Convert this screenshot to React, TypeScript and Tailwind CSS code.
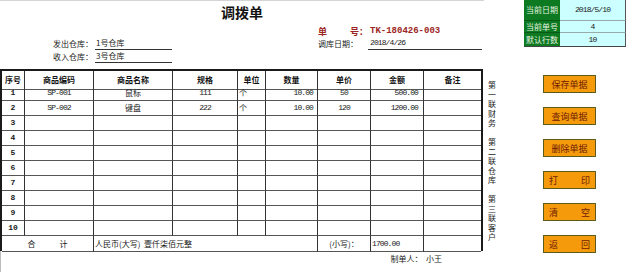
import React from "react";

const CJK = "font-['Noto_Sans_CJK_SC',sans-serif]";
const MONO = "font-['Liberation_Mono','Noto_Sans_CJK_SC',monospace]";

type Row = {
  n: number;
  code?: string;
  name?: string;
  spec?: string;
  unit?: string;
  qty?: string;
  price?: string;
  amt?: string;
};

const rows: Row[] = [
  { n: 1, code: "SP-001", name: "鼠标", spec: "111", unit: "个", qty: "10.00", price: "50", amt: "500.00" },
  { n: 2, code: "SP-002", name: "键盘", spec: "222", unit: "个", qty: "10.00", price: "120", amt: "1200.00" },
  { n: 3 },
  { n: 4 },
  { n: 5 },
  { n: 6 },
  { n: 7 },
  { n: 8 },
  { n: 9 },
  { n: 10 },
];

const headers = ["序号", "商品编码", "商品名称", "规格", "单位", "数量", "单价", "金额", "备注"];

const cell = "border-r border-b border-r-[#333] border-b-[#555] flex items-center text-[8px] leading-none text-[#1a1a1a]";
const lastCell = "border-b border-b-[#555] flex items-center text-[8px] leading-none text-[#1a1a1a]";
const num = `${MONO} tracking-[-0.9px]`;

const side = ["第", "一", "联", "财", "务", "", "第", "二", "联", "仓", "库", "", "第", "三", "联", "客", "户"];

function Btn({ children, spread }: { children: React.ReactNode; spread?: boolean }) {
  return (
    <div
      className={`h-[18px] w-[53px] bg-[#f49a0b] border-[1.5px] border-[#5b5a18] flex items-center ${
        spread ? "justify-between px-[5px]" : "justify-center"
      } text-[9px] leading-none text-[#6e1a05] ${CJK}`}
    >
      {children}
    </div>
  );
}

export default function App() {
  return (
    <div className={`w-[640px] h-[272px] bg-white flex overflow-hidden ${CJK}`}>
      {/* Left: form */}
      <div className="w-[484px] flex flex-col">
        <div className="h-[69px] flex flex-col border-t border-t-[#d4d4d4]">
          <div className="h-[21px] flex items-center justify-center">
            <span className="text-[14px] font-bold leading-none text-[#111]">调拨单</span>
          </div>
          <div className="h-[16px] flex items-center pt-[2px] pl-[318px] text-[9px] leading-none font-bold text-[#9b2522]">
            <span className="w-[32px]">单</span>
            <span className="w-[20px]">号：</span>
            <span className={`${MONO} text-[9px] font-bold`}>TK-180426-003</span>
          </div>
          <div className="h-[12px] flex items-end text-[8px] leading-none text-[#1a1a1a]">
            <div className="w-[318px] flex items-end pl-[53px]">
              <span className="w-[42px] pb-[2px]">发出仓库：</span>
              <span className="w-[77px] border-b border-b-[#333] pb-[2px] pl-[1px]">1号仓库</span>
            </div>
            <span className="w-[50px] pb-[2px]">调库日期：</span>
            <span className={`w-[114px] border-b border-b-[#333] pb-[2px] pl-[2px] ${num}`}>2018/4/26</span>
          </div>
          <div className="h-[13px] flex items-end text-[8px] leading-none text-[#1a1a1a]">
            <div className="w-[318px] flex items-end pl-[53px]">
              <span className="w-[42px] pb-[2px]">收入仓库：</span>
              <span className="w-[77px] border-b border-b-[#333] pb-[2px] pl-[1px]">3号仓库</span>
            </div>
          </div>
        </div>

        {/* Table */}
        <div className="w-[483px] grid grid-cols-[23px_69px_79px_65px_28px_52px_53px_53px_57px] auto-rows-[15px] border-l-2 border-t-2 border-r-2 border-[#1a1a1a]">
          {headers.map((h, i) => (
            <div
              key={h}
              className={`${i === 8 ? lastCell : cell} h-[19px] justify-center font-bold text-[#111]`}
            >
              {h}
            </div>
          ))}
          {rows.map((r) => (
            <React.Fragment key={r.n}>
              <div className={`${cell} justify-center font-bold ${MONO} text-[8px]`}>{r.n}</div>
              <div className={`${cell} justify-center`}>
                <span className={num}>{r.code}</span>
              </div>
              <div className={`${cell} justify-center`}>{r.name}</div>
              <div className={`${cell} justify-center`}>
                <span className={num}>{r.spec}</span>
              </div>
              <div className={`${cell} justify-start pl-[1px]`}>{r.unit}</div>
              <div className={`${cell} justify-end pr-[4px]`}>
                <span className={num}>{r.qty}</span>
              </div>
              <div className={`${cell} justify-center`}>
                <span className={num}>{r.price}</span>
              </div>
              <div className={`${cell} justify-end pr-[5px]`}>
                <span className={num}>{r.amt}</span>
              </div>
              <div className={lastCell}></div>
            </React.Fragment>
          ))}
          <div className={`${cell} col-span-2 h-[16px] justify-center gap-[24px]`}>
            <span>合</span>
            <span>计</span>
          </div>
          <div className={`${cell} col-span-4 h-[16px] justify-start pl-[1px]`}>人民币(大写)&nbsp;&nbsp;壹仟柒佰元整</div>
          <div className={`${cell} h-[16px] justify-center`}>(小写)：</div>
          <div className={`${cell} h-[16px] justify-start pl-[1px]`}>
            <span className={num}>1700.00</span>
          </div>
          <div className={`${lastCell} h-[16px]`}></div>
        </div>
        <div className="flex-1 flex">
          <div className="w-[1px] bg-[#bdbdbd]"></div>
          <div className="flex-1 flex justify-end pr-[42px] pt-[4px]">
            <span className="text-[8px] leading-none text-[#1a1a1a]">制单人：&nbsp;&nbsp;小王</span>
          </div>
        </div>
      </div>

      {/* Middle: vertical text */}
      <div className="w-[16px] flex flex-col items-center pt-[80px]">
        {side.map((c, i) => (
          <span key={i} className="h-[9.5px] text-[8px] leading-[9.5px] text-[#1a1a1a]">
            {c}
          </span>
        ))}
      </div>

      {/* Right: info + buttons */}
      <div className="flex-1 flex flex-col">
        <div className="ml-[24px] w-[102px] grid grid-cols-[36px_66px] text-[8px] leading-none">
          <div className="h-[21px] bg-[#0d7a21] text-[#e6f2e0] flex items-center justify-center border-b border-b-[#0a5a18]">当前日期</div>
          <div className="h-[21px] bg-[#ccffff] text-[#1a1a1a] flex items-center justify-center border-b border-b-[#9aa] border-r border-r-[#555]">
            <span className={num}>2018/5/10</span>
          </div>
          <div className="h-[12px] bg-[#0d7a21] text-[#e6f2e0] flex items-center justify-center border-b border-b-[#0a5a18]">当前单号</div>
          <div className="h-[12px] bg-[#ccffff] text-[#1a1a1a] flex items-center justify-center border-b border-b-[#9aa] border-r border-r-[#555]">
            <span className={num}>4</span>
          </div>
          <div className="h-[14px] bg-[#0d7a21] text-[#e6f2e0] flex items-center justify-center border-b border-b-[#444]">默认行数</div>
          <div className="h-[14px] bg-[#ccffff] text-[#1a1a1a] flex items-center justify-center border-b border-b-[#444] border-r border-r-[#555]">
            <span className={num}>10</span>
          </div>
        </div>
        <div className="ml-[43px] mt-[28px] flex flex-col gap-[14px]">
          <Btn>保存单据</Btn>
          <Btn>查询单据</Btn>
          <Btn>删除单据</Btn>
          <Btn spread>
            <span>打</span>
            <span>印</span>
          </Btn>
          <Btn spread>
            <span>清</span>
            <span>空</span>
          </Btn>
          <Btn spread>
            <span>返</span>
            <span>回</span>
          </Btn>
        </div>
      </div>
    </div>
  );
}
